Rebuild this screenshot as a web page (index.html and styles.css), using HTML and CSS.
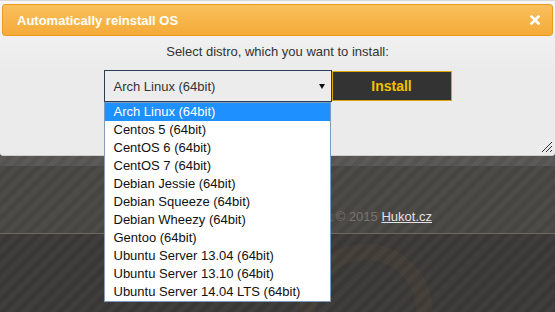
FILE: index.html
```html
<!DOCTYPE html>
<html lang="cs">
<head>
    <meta charset="UTF-8">
    <title>Automatically reinstall OS</title>
    <link rel="stylesheet" href="styles.css">
</head>
<body>
    <!-- Reinstall dialog -->
    <div class="panel">
        <div class="titlebar">
            <span class="title">Automatically reinstall OS</span>
            <svg class="close" width="10" height="10" viewBox="0 0 10 10">
                <path d="M1.5 1.5 L8.5 8.5 M8.5 1.5 L1.5 8.5" stroke="#fff" stroke-width="2.6" stroke-linecap="square"/>
            </svg>
        </div>

        <p class="prompt">Select distro, which you want to install:</p>

        <div class="form-row">
            <div class="select">
                <span>Arch Linux (64bit)</span>
                <span class="arrow"></span>
                <ul class="options">
                    <li class="selected">Arch Linux (64bit)</li>
                    <li>Centos 5 (64bit)</li>
                    <li>CentOS 6 (64bit)</li>
                    <li>CentOS 7 (64bit)</li>
                    <li>Debian Jessie (64bit)</li>
                    <li>Debian Squeeze (64bit)</li>
                    <li>Debian Wheezy (64bit)</li>
                    <li>Gentoo (64bit)</li>
                    <li>Ubuntu Server 13.04 (64bit)</li>
                    <li>Ubuntu Server 13.10 (64bit)</li>
                    <li>Ubuntu Server 14.04 LTS (64bit)</li>
                </ul>
            </div>
            <button class="install">Install</button>
        </div>

        <svg class="grip" width="12" height="12" viewBox="0 0 12 12">
            <path d="M1 11 L11 1 M5 11 L11 5 M9 11 L11 9" stroke="#333" stroke-width="1"/>
        </svg>
    </div>

    <!-- Footer -->
    <footer>
        <div class="band"></div>
        <div class="copy">
            <p>Copyright &copy; 2015 <a href="#">Hukot.cz</a></p>
        </div>
        <div class="bottom"></div>
    </footer>
</body>
</html>
```

FILE: styles.css
```css
body {
    margin: 0;
    font-family: "Liberation Sans", Arial, sans-serif;
    font-size: 13px;
    color: #333;
    background: #3e3c3a;
    height: 312px;
    overflow: hidden;
}

/* Dialog panel */
.panel {
    position: relative;
    height: 156px;
    padding: 3px 2px 0;
    box-sizing: border-box;
    background: linear-gradient(#f6f6f6, #ebebeb 45%, #ebebeb);
    border-top: 1px solid #d8d8d8;
    border-bottom: 1px solid #d0d0d0;
    border-radius: 0 0 3px 3px;
}
.titlebar {
    height: 32px;
    box-sizing: border-box;
    display: flex;
    align-items: center;
    justify-content: space-between;
    padding: 0 12px 0 14px;
    background: linear-gradient(#f9bf5c, #f5ab39);
    border: 1px solid #ec9a1f;
    border-radius: 3px;
}
.title {
    color: #fff;
    font-weight: bold;
    font-size: 13px;
}
.prompt {
    margin: 7px 0 0;
    text-align: center;
    line-height: 17px;
}

.form-row {
    display: flex;
    justify-content: center;
    align-items: center;
    margin-top: 10px;
}
.select {
    position: relative;
    width: 228px;
    height: 32px;
    box-sizing: border-box;
    border: 1px solid #2f3c58;
    background: #ececec;
    display: flex;
    align-items: center;
    padding-left: 9px;
}
.arrow {
    position: absolute;
    right: 6px;
    top: 13px;
    border-left: 3.5px solid transparent;
    border-right: 3.5px solid transparent;
    border-top: 5px solid #111;
}
.install {
    width: 120px;
    height: 30px;
    background: #333;
    border: 1px solid #d8a800;
    color: #f5c000;
    font-family: "Liberation Sans", Arial, sans-serif;
    font-weight: bold;
    font-size: 14px;
    cursor: pointer;
}

/* Open dropdown list */
.options {
    position: absolute;
    left: -1px;
    top: 31px;
    width: 227px;
    box-sizing: border-box;
    margin: 0;
    padding: 0;
    list-style: none;
    background: #fff;
    border: 1px solid #7f9db9;
    z-index: 5;
}
.options li {
    height: 18px;
    line-height: 18px;
    padding-left: 9px;
    color: #111;
}
.options li.selected {
    background: #1e90ff;
    color: #fff;
}

.grip {
    position: absolute;
    right: 2px;
    bottom: 2px;
}

/* Footer */
footer {
    background-color: #4a4845;
}
.band {
    height: 10px;
    background: repeating-linear-gradient(135deg, #5b5a59 0 5px, #555453 5px 10px);
}
.copy {
    height: 68px;
    display: flex;
    justify-content: flex-end;
    align-items: flex-end;
    padding: 0 123px 9px 0;
    box-sizing: border-box;
    background: repeating-linear-gradient(135deg, #4d4b48 0 5px, #474542 5px 10px);
    border-bottom: 1px solid #6c6964;
}
.copy p {
    margin: 0;
    color: #77746f;
}
.copy a {
    color: #e2e2e2;
}
.bottom {
    position: relative;
    height: 80px;
    overflow: hidden;
    background: repeating-linear-gradient(135deg, #403e3c 0 5px, #3a3836 5px 10px);
}
.bottom::after {
    content: "";
    position: absolute;
    left: 300px;
    top: 10px;
    width: 100px;
    height: 100px;
    border: 16px solid rgba(150, 100, 50, 0.08);
    border-radius: 50%;
}
```
